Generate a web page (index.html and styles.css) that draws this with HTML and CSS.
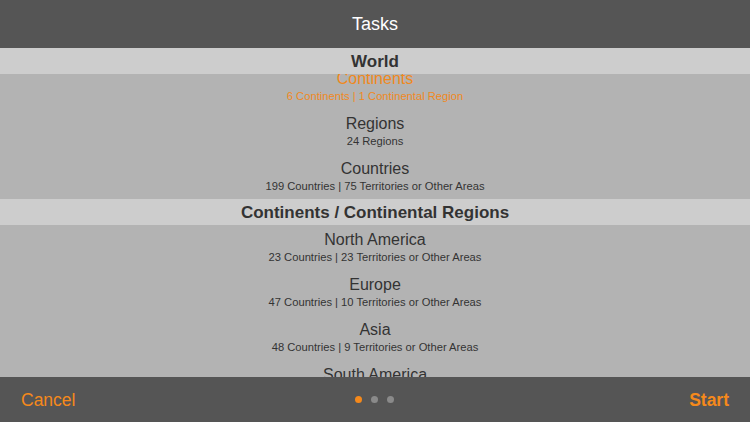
FILE: index.html
```html
<!DOCTYPE html>
<html>
<head>
<meta charset="utf-8">
<link rel="stylesheet" href="styles.css">
</head>
<body>
<div class="app">
  <header class="topbar"><span class="title">Tasks</span></header>
  <main class="list">
    <div class="scroll">
      <section class="section">
        <div class="section-head">World</div>
        <div class="item selected"><div class="item-title">Continents</div><div class="item-sub">6 Continents | 1 Continental Region</div></div>
        <div class="item"><div class="item-title">Regions</div><div class="item-sub">24 Regions</div></div>
        <div class="item"><div class="item-title">Countries</div><div class="item-sub">199 Countries | 75 Territories or Other Areas</div></div>
      </section>
      <section class="section">
        <div class="section-head">Continents / Continental Regions</div>
        <div class="item"><div class="item-title">North America</div><div class="item-sub">23 Countries | 23 Territories or Other Areas</div></div>
        <div class="item"><div class="item-title">Europe</div><div class="item-sub">47 Countries | 10 Territories or Other Areas</div></div>
        <div class="item"><div class="item-title">Asia</div><div class="item-sub">48 Countries | 9 Territories or Other Areas</div></div>
        <div class="item"><div class="item-title">South America</div></div>
      </section>
    </div>
  </main>
  <footer class="bottombar">
    <span class="btn cancel">Cancel</span>
    <div class="dots"><span class="dot active"></span><span class="dot"></span><span class="dot"></span></div>
    <span class="btn start">Start</span>
  </footer>
</div>
</body>
</html>
```
FILE: styles.css
```css
* { box-sizing: border-box; }
html, body { margin: 0; padding: 0; }
body {
  font-family: "Liberation Sans", Arial, sans-serif;
  width: 750px;
  height: 422px;
  overflow: hidden;
  background: #b3b3b3;
}
.app {
  display: flex;
  flex-direction: column;
  height: 422px;
}
.topbar {
  height: 48px;
  flex: 0 0 48px;
  background: #555555;
  display: flex;
  align-items: center;
  justify-content: center;
}
.title {
  color: #ffffff;
  font-size: 18px;
  padding-top: 1px;
}
.list {
  flex: 1 1 auto;
  overflow: hidden;
  background: #b3b3b3;
}
.scroll {
  margin-top: -10px;
}
.section-head {
  position: sticky;
  top: 0;
  z-index: 2;
  height: 26px;
  background: #cdcdcd;
  color: #333333;
  font-size: 17px;
  font-weight: bold;
  display: flex;
  align-items: center;
  justify-content: center;
  padding-top: 2px;
}
.item {
  height: 45px;
  display: flex;
  flex-direction: column;
  align-items: center;
  padding-top: 5px;
  color: #333333;
}
.item-title {
  font-size: 16px;
  line-height: 20px;
}
.item-sub {
  font-size: 11.2px;
  line-height: 14px;
}
.item.selected { color: #f0891e; }
.bottombar {
  height: 45px;
  flex: 0 0 45px;
  background: #555555;
  display: flex;
  align-items: center;
  justify-content: space-between;
  padding: 0 21px 0 21px;
  position: relative;
}
.btn {
  color: #f5891b;
  font-size: 17.5px;
  padding-top: 2px;
}
.start { font-weight: bold; }
.dots {
  display: flex;
  gap: 9px;
  position: absolute;
  left: 355px;
  top: 19px;
}
.dot {
  width: 7px;
  height: 7px;
  border-radius: 50%;
  background: #8a8a8a;
}
.dot.active { background: #f5891b; }
```
